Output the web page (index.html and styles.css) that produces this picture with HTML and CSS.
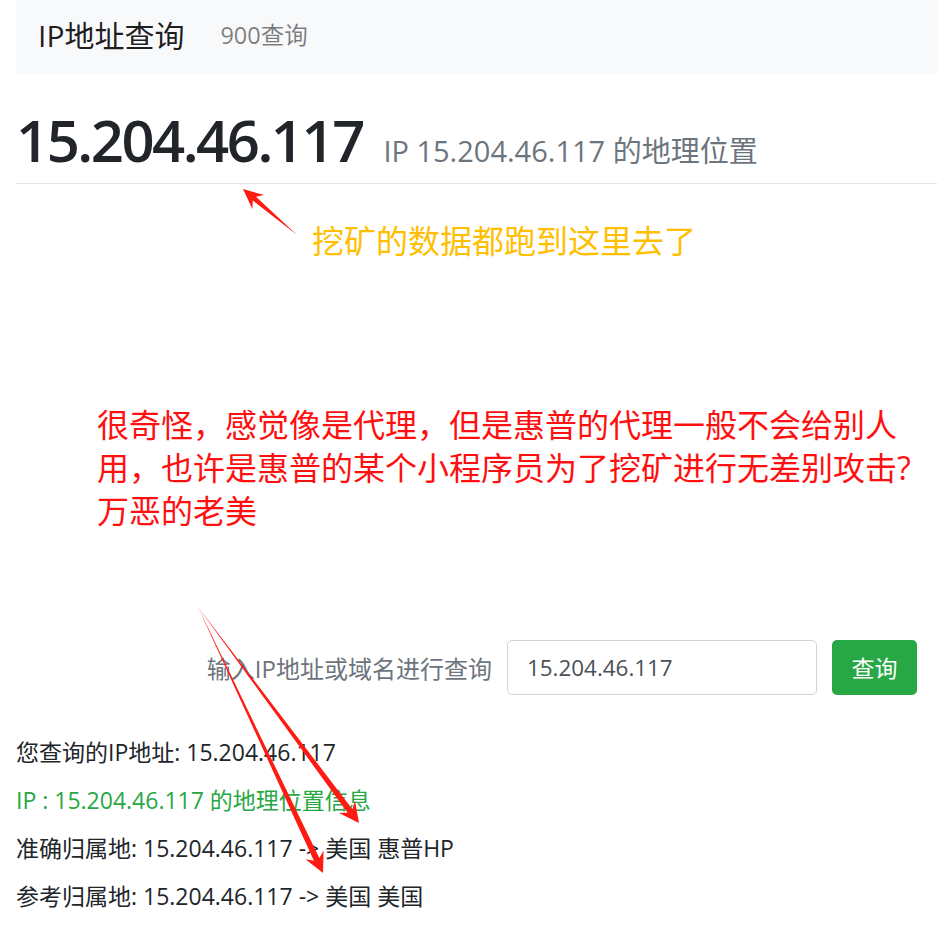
FILE: index.html
```html
<!DOCTYPE html>
<html lang="zh-CN">
  <head>
    <meta charset="UTF-8" />
    <meta name="viewport" content="width=device-width, initial-scale=1.0" />
    <title>IP地址查询</title>
    <link rel="stylesheet" href="styles.css">
  </head>
  <body>
    <div class="page">
      <nav class="navbar">
        <span class="brand">IP地址查询</span>
        <span class="nav-link">900查询</span>
      </nav>

      <h1 class="title">
        15.204.46.117
        <small>IP 15.204.46.117 的地理位置</small>
      </h1>

      <p class="note-yellow">挖矿的数据都跑到这里去了</p>

      <p class="note-red">
        很奇怪，感觉像是代理，但是惠普的代理一般不会给别人<br>
        用，也许是惠普的某个小程序员为了挖矿进行无差别攻击?<br>
        万恶的老美
      </p>

      <form class="search-form" onsubmit="return false">
        <label for="ip">输入IP地址或域名进行查询</label>
        <input type="text" id="ip" value="15.204.46.117" />
        <button type="submit">查询</button>
      </form>

      <div class="result">
        <p>您查询的IP地址: 15.204.46.117</p>
        <p class="green">IP : 15.204.46.117 的地理位置信息</p>
        <p>准确归属地: 15.204.46.117 -&gt; 美国 惠普HP</p>
        <p>参考归属地: 15.204.46.117 -&gt; 美国 美国</p>
      </div>
    </div>

    <svg class="arrows" width="937" height="928" viewBox="0 0 937 928">
      <polygon points="297,235 256,196.8 264.1,195.1 243,189 252.4,208.9 252.8,200.6" />
      <polygon points="198,607 347.6,812.8 339,813 359,823 355,801 352.4,809.2" />
      <polygon points="198,607 313.9,860.7 305.5,859.2 323,873 323.6,850.7 319.3,858.1" />
    </svg>
  </body>
</html>
```

FILE: styles.css
```css
body {
  margin: 0;
  font-family: "Open Sans", "Noto Sans CJK SC", sans-serif;
  font-size: 23px;
  color: #212529;
  background: #fff;
}
.page {
  padding-left: 16px;
}
.navbar {
  display: flex;
  align-items: center;
  height: 68px;
  padding: 0 22px 6px;
  background: #f8f9fa;
}
.brand {
  font-size: 30px;
  color: rgba(0, 0, 0, 0.9);
  margin-right: 36px;
}
.nav-link {
  font-size: 23.5px;
  color: rgba(0, 0, 0, 0.5);
}
.title {
  margin: 31px 0 0;
  padding-bottom: 8px;
  border-bottom: 1px solid #e2e4e6;
  font-size: 58px;
  font-weight: 600;
  letter-spacing: -2.5px;
  line-height: 1.2;
  white-space: nowrap;
}
.title small {
  margin-left: 8px;
  font-size: 29px;
  font-weight: 400;
  letter-spacing: 0;
  color: #6c757d;
}
.note-yellow {
  margin: 36px 0 0 296px;
  font-size: 32px;
  line-height: 42px;
  color: #ffbf00;
}
.note-red {
  margin: 141px 0 0 81px;
  font-size: 32px;
  line-height: 43px;
  color: #ff1010;
}
.search-form {
  display: flex;
  justify-content: flex-end;
  align-items: center;
  gap: 15px;
  margin-top: 108px;
  padding-right: 20px;
}
.search-form label {
  font-size: 24px;
  color: #6c757d;
}
.search-form input {
  box-sizing: border-box;
  width: 310px;
  height: 55px;
  padding: 0 19px;
  border: 1px solid #ced4da;
  border-radius: 5px;
  font: inherit;
  font-size: 22.4px;
  color: #495057;
}
.search-form button {
  height: 55px;
  width: 85px;
  border: none;
  border-radius: 5px;
  background: #28a745;
  color: #fff;
  font: inherit;
}
.result {
  margin-top: 33px;
}
.result p {
  margin: 0;
  line-height: 48px;
}
.result .green {
  color: #28a745;
}
.arrows {
  position: absolute;
  top: 0;
  left: 0;
  pointer-events: none;
}
.arrows polygon {
  fill: #ff1a12;
}
```
